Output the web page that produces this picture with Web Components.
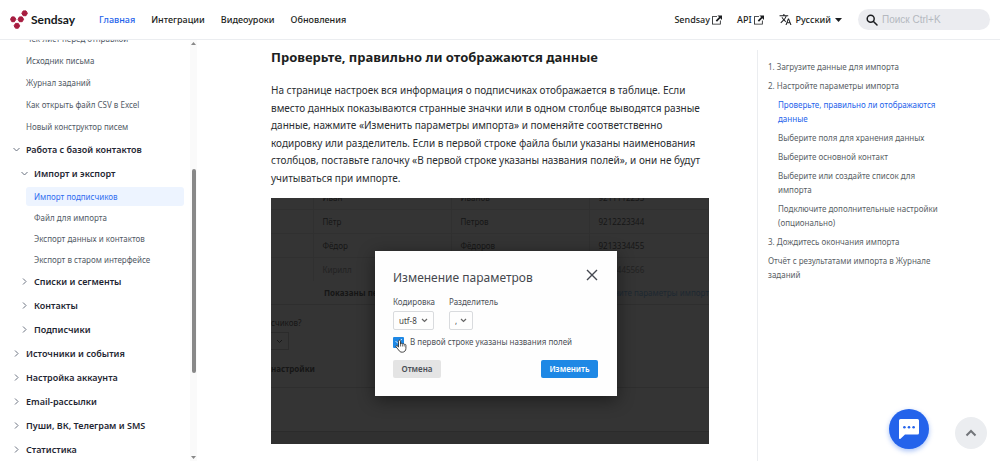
<!DOCTYPE html>
<html lang="ru">
<head>
<meta charset="utf-8">
<meta name="viewport" content="width=device-width, initial-scale=1">
<title>Импорт подписчиков — Sendsay</title>
<style>
html,body{margin:0;height:100%}
body{font-family:"Noto Sans","Open Sans",sans-serif;color:#1c1e21;background:#fff;overflow:hidden}
</style>
</head>
<body>
<docs-page></docs-page>
<script>
const define=(name,html,setup)=>{
  const t=document.createElement('template');t.innerHTML=html;
  customElements.define(name,class extends HTMLElement{
    connectedCallback(){
      if(this.shadowRoot)return;
      this.attachShadow({mode:'open'}).append(t.content.cloneNode(true));
      if(setup)setup(this,this.shadowRoot);
    }
  });
};

/* Brand logo */
define('brand-logo',`
<style>
:host{display:block}
a{display:flex;align-items:center;gap:3px;color:#15171a;text-decoration:none;font:700 12px/20px Lato,sans-serif}
svg{display:block}
</style>
<a href="#"><svg width="18" height="20" viewBox="0 0 18 20" fill="#a71d40" stroke="#a71d40" stroke-width="1" stroke-linejoin="round"><path d="M13.200.900h2.800l1.400 2.400-1.400 2.400h-2.800l-1.400-2.400z"/><path d="M1.800 6.900h2.600l1.500 2.400-1.500 2.400H1.800L.500 9.300z"/><path d="M9.400 6.900h2.800l1.400 2.400-1.400 2.400H9.400L8 9.300z"/><path d="M5.500 13.400h2.800l1.400 2.400-1.400 2.400H5.500l-1.400-2.400z"/></svg><span>Sendsay</span></a>`);

/* Header link; "external" adds the outbound arrow */
define('header-link',`
<style>
:host{display:block}
a{display:flex;align-items:center;gap:2px;font-size:9px;line-height:20px;font-weight:500;color:#1c1e21;text-decoration:none;white-space:nowrap}
:host([active]) a{color:#2463eb}
svg{display:none}
:host([external]) svg{display:block}
</style>
<a href="#"><slot></slot><svg width="10" height="10" viewBox="0 0 24 24" fill="currentColor"><path d="M21 13v10H0V3h12v2H2v16h17v-8h2zm3-12h-11l4 4-8 8 3 3 8-8 4 4V1z"/></svg></a>`);

define('site-header',`
<style>
:host{display:flex;align-items:center;height:39px;border-bottom:1px solid #ebedf0;background:#fff;padding:0 10px;position:relative;z-index:2}
nav{display:flex;align-items:center;gap:16px}
.main{margin-left:24px}
.aux{margin-left:auto;gap:15px}
.lang{display:flex;align-items:center;gap:4px;border:0;background:none;padding:0;font:500 9px/20px "Noto Sans",sans-serif;color:#1c1e21}
.search{display:flex;align-items:center;gap:4px;background:#ebecf0;border-radius:12px;height:21px;width:132px;box-sizing:border-box;padding:0 8px;margin-left:16px}
input{border:0;background:none;outline:0;padding:0;min-width:0;flex:1;font:10px/20px "Liberation Sans",sans-serif}
input::placeholder{color:#b4b8bf;opacity:1}
</style>
<brand-logo></brand-logo>
<nav class="main"><header-link active>Главная</header-link><header-link>Интеграции</header-link><header-link>Видеоуроки</header-link><header-link>Обновления</header-link></nav>
<nav class="aux"><header-link external>Sendsay</header-link><header-link external>API</header-link>
<button class="lang"><svg width="13" height="13" viewBox="0 0 24 24" fill="currentColor"><path d="M12.870 15.070l-2.540-2.510.030-.030c1.740-1.940 2.980-4.170 3.710-6.530H17V4h-7V2H8v2H1v1.990h11.170C11.500 7.920 10.440 9.750 9 11.350 8.070 10.320 7.300 9.190 6.690 8h-2c.730 1.630 1.730 3.170 2.980 4.560l-5.090 5.020L4 19l5-5 3.110 3.110.760-2.040zM18.500 10h-2L12 22h2l1.120-3h4.750L21 22h2l-4.500-12zm-2.620 7l1.620-4.330L19.120 17h-3.240z"/></svg><span>Русский</span><svg width="7" height="5" viewBox="0 0 7 5"><path d="M0 1h7L3.500 5z" fill="currentColor"/></svg></button></nav>
<label class="search"><svg width="12" height="12" viewBox="0 0 12 12" fill="none" stroke="#1c1e21" stroke-width="1.500" stroke-linecap="round"><circle cx="4.700" cy="4.700" r="3.500"/><path d="M7.500 7.500l3.500 3.500"/></svg><input type="search" placeholder="Поиск Ctrl+K" aria-label="Поиск"></label>`);

/* Sidebar row: a page link, or a category with a chevron */
define('side-item',`
<style>
:host{display:block;margin-bottom:3px;margin-left:calc(var(--level,0)*8px)}
:host([level="2"]){margin-bottom:2px}
a{display:flex;align-items:center;text-decoration:none;white-space:nowrap;border-radius:3px;font-size:8px;line-height:19px;color:#525a66;padding-left:8px}
svg{display:none;margin-right:6px}
:host([open]) a,:host([closed]) a{font-size:9px;line-height:21px;font-weight:600;color:#1f2733;padding-left:3px}
:host([open]) svg,:host([closed]) svg{display:block}
:host([open]) svg{transform:rotate(90deg)}
:host([active]) a{background:#edf4ff;color:#2f6cf0}
</style>
<a href="#"><svg width="7" height="7" viewBox="0 0 7 7" fill="none" stroke="#6b7280" stroke-width="1"><path d="M2 0.500l3 3-3 3"/></svg><slot></slot></a>`,
(h)=>h.style.setProperty('--level',h.getAttribute('level')||0));

define('side-nav',`
<style>
:host{display:flex;overflow:hidden;height:calc(100vh - 40px)}
nav{flex:1;min-width:0;padding:0 6px 0 10px;margin-top:-11px}
.bar{width:7px;background:#fafafa;display:grid;grid-template-rows:7px 120fr 200fr 80fr 7px;justify-items:center;align-items:center}
.thumb{grid-row:3;width:4px;height:100%;border-radius:2px;background:#888}
.down{grid-row:5}
</style>
<nav>
<side-item level="1">Чек-лист перед отправкой</side-item>
<side-item level="1">Исходник письма</side-item>
<side-item level="1">Журнал заданий</side-item>
<side-item level="1">Как открыть файл CSV в Excel</side-item>
<side-item level="1">Новый конструктор писем</side-item>
<side-item level="0" open>Работа с базой контактов</side-item>
<side-item open level="1">Импорт и экспорт</side-item>
<side-item active level="2">Импорт подписчиков</side-item>
<side-item level="2">Файл для импорта</side-item>
<side-item level="2">Экспорт данных и контактов</side-item>
<side-item level="2">Экспорт в старом интерфейсе</side-item>
<side-item closed level="1">Списки и сегменты</side-item>
<side-item closed level="1">Контакты</side-item>
<side-item closed level="1">Подписчики</side-item>
<side-item level="0" closed>Источники и события</side-item>
<side-item level="0" closed>Настройка аккаунта</side-item>
<side-item level="0" closed>Email-рассылки</side-item>
<side-item level="0" closed>Пуши, ВК, Телеграм и SMS</side-item>
<side-item level="0" closed>Статистика</side-item>
</nav>
<div class="bar"><svg width="5" height="3" viewBox="0 0 5 3"><path d="M0 3h5L2.500 0z" fill="#888"/></svg><div class="thumb"></div><svg class="down" width="5" height="3" viewBox="0 0 5 3"><path d="M0 0h5L2.500 3z" fill="#888"/></svg></div>`);

define('pick-list',`
<style>
:host{display:block}
label{display:block;font-size:8px;line-height:12px;color:#4b4f56;margin-bottom:3px}
.box{display:grid;width:var(--w);align-items:center;border:1px solid #d9dbde;border-radius:2px}
select,svg{grid-area:1/1}
select{appearance:none;border:0;background:none;font:8px/17px "Noto Sans",sans-serif;height:17px;padding:0 10px 0 5px;color:#444;width:100%}
svg{justify-self:end;margin-right:5px}
</style>
<label for="s"></label><span class="box"><select id="s"><option></option></select><svg width="7" height="5" viewBox="0 0 7 5" fill="none" stroke="#666" stroke-width="1.200"><path d="M1 1l2.500 2.500L6 1"/></svg></span>`,
(h,r)=>{r.querySelector('label').textContent=h.getAttribute('label');r.querySelector('option').textContent=h.getAttribute('value');});

define('params-dialog',`
<style>
:host{display:block;box-sizing:border-box;background:#fefefe;padding:16px 19px 18px 18px;box-shadow:0 4px 16px rgba(0,0,0,.45)}
header{display:flex;justify-content:space-between;align-items:flex-start}
h3{margin:0;font-size:12px;line-height:22px;font-weight:400;color:#45484e}
button{border:0;padding:0;border-radius:2px;font:600 8px/18px "Noto Sans",sans-serif;height:18px}
.x{background:none;height:auto;margin-top:2px;line-height:0}
.row{display:flex;gap:14px;margin-top:7px}
.check{display:flex;align-items:center;gap:6px;font-size:8px;line-height:12px;color:#4b4f56;margin-top:6px;position:relative}
input{appearance:none;margin:0;width:11px;height:11px;background:#1e88e5;border-radius:1px}
.hand{position:absolute;left:1px;top:2px}
footer{display:flex;justify-content:space-between;margin-top:12px}
.no{background:#e4e4e4;color:#4b4f56;width:48px}
.yes{background:#1e88e5;color:#fff;width:57px}
</style>
<header><h3>Изменение параметров</h3><button class="x" aria-label="Закрыть"><svg width="12" height="12" viewBox="0 0 12 12" stroke="#444850" stroke-width="1.400"><path d="M1 1l10 10M11 1L1 11"/></svg></button></header>
<div class="row"><pick-list label="Кодировка" value="utf-8" style="--w:39px"></pick-list><pick-list label="Разделитель" value="," style="--w:22px"></pick-list></div>
<label class="check"><input type="checkbox" checked><svg class="hand" width="13" height="15" viewBox="0 0 13 15"><path d="M1.500 3l2 2L8 1" fill="none" stroke="#cfe6fb"/><path d="M4.500 9V3.200c0-1.500 2-1.500 2 0V6c0-1 1.800-1 1.900.200.200-.800 1.700-.700 1.800.400.400-.700 1.700-.400 1.700.700v3.200c0 2-1.400 3.700-3.600 3.700-2 0-2.800-.800-3.700-2.200L2 8.800c-.500-1.100.700-1.600 1.300-.900z" fill="#fff" stroke="#333" stroke-width=".9"/><path d="M6.500 6v2.500M8.400 6.500v2M10.200 7v1.500" stroke="#333" stroke-width=".7"/></svg><span>В первой строке указаны названия полей</span></label>
<footer><button class="no">Отмена</button><button class="yes">Изменить</button></footer>`);

/* Illustration: import table dimmed behind the dialog */
define('import-preview',`
<style>
:host{display:block;position:relative;overflow:hidden;height:246px;background:#343434;color:#161616;font-size:8px;line-height:23px}
table{border-collapse:collapse;width:100%;table-layout:fixed;margin-top:-12px}
td{height:23px;padding:0 0 0 9px;border-right:1px solid #303030;border-bottom:1px solid #303030}
tr:last-child td{color:#222;border-bottom:0}
.info{display:flex;justify-content:space-between;white-space:nowrap;padding-left:53px;border-bottom:1px solid #2e2e2e}
.info a{color:#1d2831;text-decoration:none;width:113px}
.set{border-bottom:1px solid #2e2e2e;line-height:18px;padding:9px 0 9px}
.set div{height:18px}
.pick{box-sizing:border-box;width:18px;border:1px solid #2b2b2b;border-left:0;display:flex;align-items:center;justify-content:center}
.set b{display:block;margin-top:10px}
.foot{height:43px;border-bottom:1px solid #2b2b2b}
.end{height:20px;background:#303030}
params-dialog{position:absolute;left:104px;top:53px;width:242px}
</style>
<table><colgroup><col style="width:42px"><col style="width:138px"><col style="width:138px"><col></colgroup>
<tr><td></td><td>Иван</td><td>Иванов</td><td>9211112233</td></tr>
<tr><td></td><td>Пётр</td><td>Петров</td><td>9212223344</td></tr>
<tr><td></td><td>Фёдор</td><td>Фёдоров</td><td>9213334455</td></tr>
<tr><td></td><td>Кирилл</td><td></td><td>9214445566</td></tr></table>
<div class="info"><b>Показаны первые</b><a href="#">Уточните параметры импорта</a></div>
<div class="set"><div>счиков?</div><div class="pick"><svg width="7" height="5" viewBox="0 0 7 5" fill="none" stroke="#181818"><path d="M1 1l2.500 2.500L6 1"/></svg></div><b>настройки</b></div>
<div class="foot"></div><div class="end"></div>
<params-dialog></params-dialog>`);

define('doc-article',`
<style>
:host{display:block;padding:7px 48px 0 74px}
h2{margin:0;font-size:13px;line-height:20px;font-weight:700;color:#1c1e21}
p{margin:15px 0 11px;font-size:10px;line-height:1.75;color:#2b2e32}
</style>
<h2>Проверьте, правильно ли отображаются данные</h2>
<p>На странице настроек вся информация о подписчиках отображается в таблице. Если вместо данных показываются странные значки или в одном столбце выводятся разные данные, нажмите «Изменить параметры импорта» и поменяйте соответственно кодировку или разделитель. Если в первой строке файла были указаны наименования столбцов, поставьте галочку «В первой строке указаны названия полей», и они не будут учитываться при импорте.</p>
<import-preview></import-preview>`);

define('toc-nav',`
<style>
:host{display:block;border-left:1px solid #ebedf0;margin-top:10px;height:calc(100vh - 50px);box-sizing:border-box;padding:10px 56px 0 10px}
ul{list-style:none;margin:0;padding:0}
ul ul{padding-left:10px}
a{display:block;font-size:8px;line-height:14px;color:#5a5f66;text-decoration:none;margin-bottom:5px}
a.on{color:#2463eb}
</style>
<ul><li><a href="#">1. Загрузите данные для импорта</a></li>
<li><a href="#">2. Настройте параметры импорта</a>
<ul><li><a class="on" href="#">Проверьте, правильно ли отображаются данные</a></li><li><a href="#">Выберите поля для хранения данных</a></li><li><a href="#">Выберите основной контакт</a></li><li><a href="#">Выберите или создайте список для импорта</a></li><li><a href="#">Подключите дополнительные настройки (опционально)</a></li></ul></li>
<li><a href="#">3. Дождитесь окончания импорта</a></li>
<li><a href="#">Отчёт с результатами импорта в Журнале заданий</a></li></ul>`);

define('float-actions',`
<style>
:host{position:fixed;right:13px;bottom:12px;display:flex;align-items:flex-end;gap:26px}
button{border:0;padding:0;border-radius:50%;display:grid;place-items:center}
.chat{width:40px;height:40px;background:#2463eb;box-shadow:0 2px 5px rgba(36,99,235,.4)}
.top{width:32px;height:32px;background:#ebedf0}
</style>
<button class="chat" aria-label="Чат"><svg width="20" height="20" viewBox="0 0 20 20"><path d="M1.500 0h17Q20 0 20 1.500v12.500q0 1.500-1.500 1.500H6l-4.500 4.300Q0 20.400 0 19V1.500Q0 0 1.500 0z" fill="#fff"/><g fill="#2463eb"><circle cx="5.400" cy="8.300" r="1.300"/><circle cx="10" cy="8.300" r="1.300"/><circle cx="14.600" cy="8.300" r="1.300"/></g></svg></button>
<button class="top" aria-label="Наверх"><svg width="12" height="8" viewBox="0 0 12 8" fill="none" stroke="#72757a" stroke-width="2"><path d="M1.500 6.500L6 2l4.500 4.500"/></svg></button>`);

define('docs-page',`
<style>
:host{display:block;height:100%}
main{display:grid;grid-template-columns:197px minmax(0,1fr) 243px;align-items:start}
</style>
<site-header></site-header>
<main><side-nav></side-nav><doc-article></doc-article><toc-nav></toc-nav></main>
<float-actions></float-actions>`);
</script>
</body>
</html>
